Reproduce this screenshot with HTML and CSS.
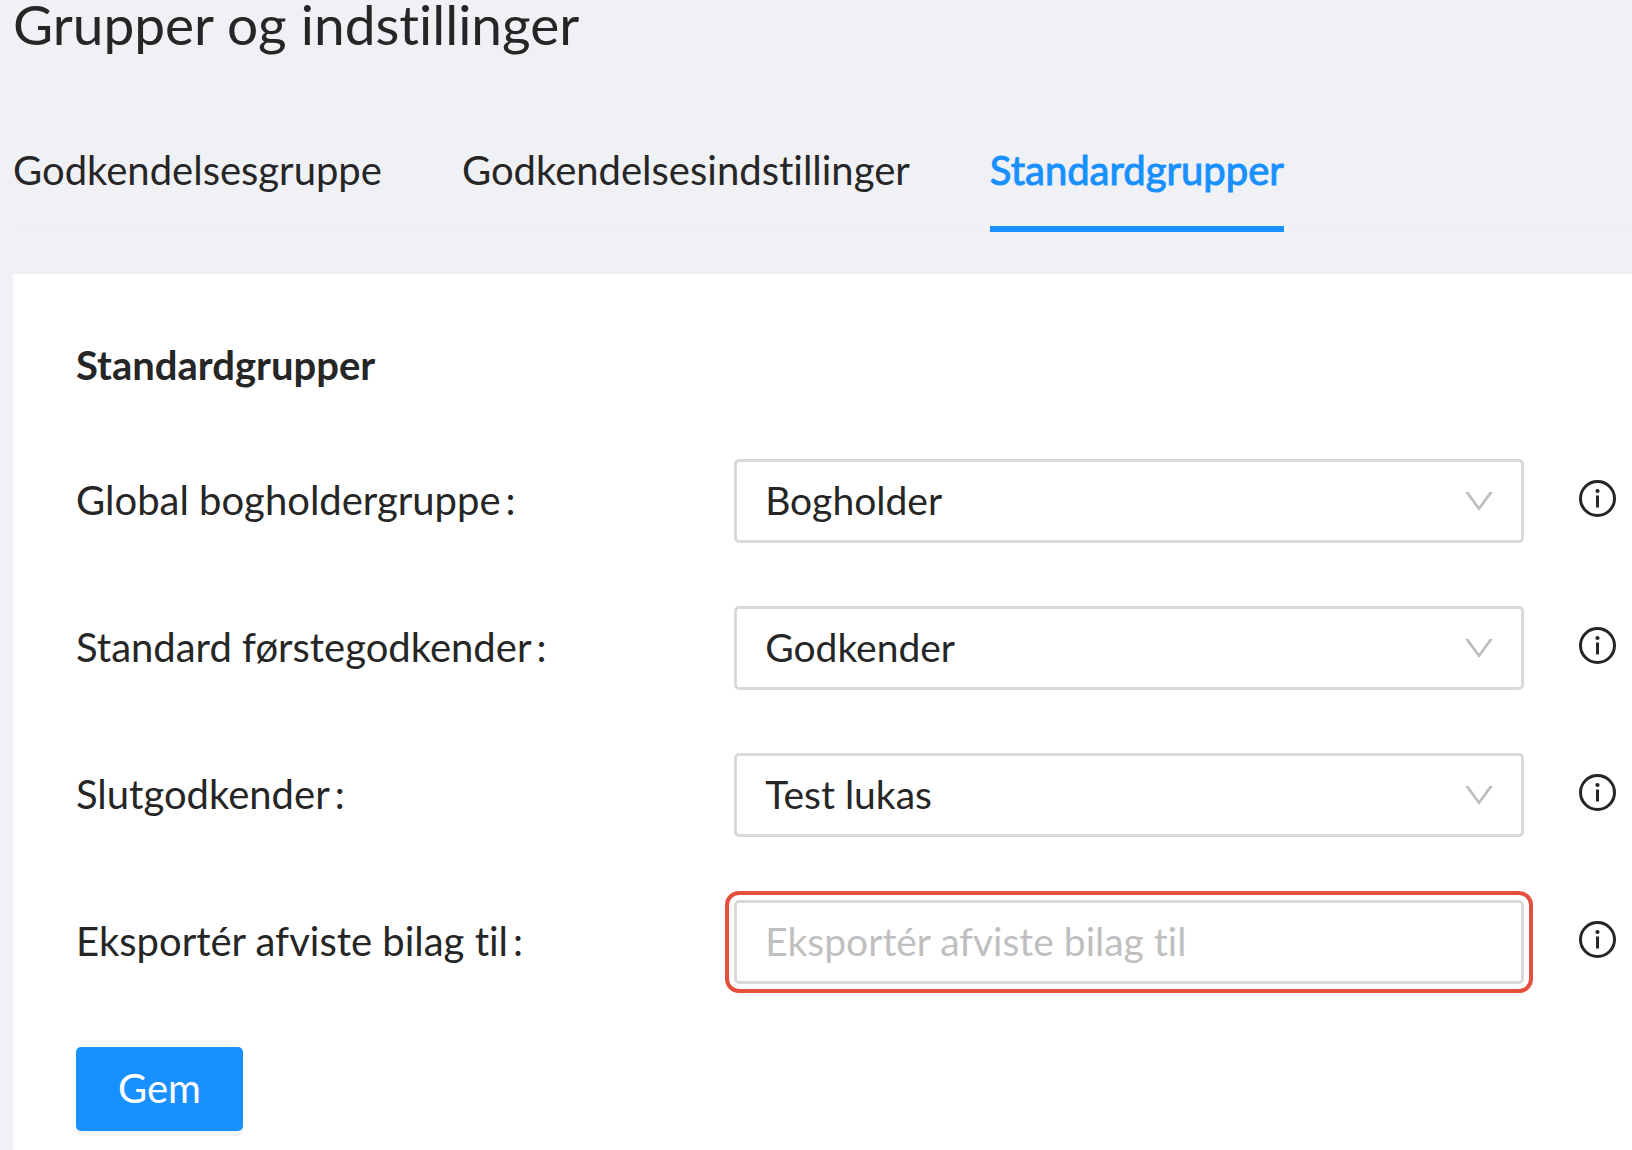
FILE: index.html
```html
<!DOCTYPE html>
<html lang="da">
<head>
    <meta charset="UTF-8">
    <meta name="viewport" content="width=device-width, initial-scale=1.0">
    <title>Grupper og indstillinger</title>
    <link rel="stylesheet" href="styles.css">
</head>
<body>
    <!-- Shared info icon -->
    <svg class="sprite" aria-hidden="true">
        <symbol id="icon-info" viewBox="0 0 37 37">
            <circle cx="18.5" cy="18.5" r="17" fill="none" stroke="currentColor" stroke-width="3"/>
            <circle cx="18.5" cy="11" r="2.1" fill="currentColor"/>
            <rect x="17" y="15.5" width="3" height="12" fill="currentColor"/>
        </symbol>
    </svg>

    <div class="page">
        <h1>Grupper og indstillinger</h1>

        <nav class="tabs">
            <a class="tab" href="#godkendelsesgruppe">Godkendelsesgruppe</a>
            <a class="tab" href="#godkendelsesindstillinger">Godkendelsesindstillinger</a>
            <a class="tab active" href="#standardgrupper" aria-current="page">Standardgrupper</a>
        </nav>

        <main class="card">
            <h2>Standardgrupper</h2>

            <form class="form">
                <div class="form-row">
                    <label for="bookkeeper">Global bogholdergruppe<span class="colon">:</span></label>
                    <select class="control" id="bookkeeper">
                        <option>Bogholder</option>
                    </select>
                    <button type="button" class="info-btn" aria-label="Info om global bogholdergruppe">
                        <svg class="icon"><use href="#icon-info"/></svg>
                    </button>
                </div>

                <div class="form-row">
                    <label for="firstApprover">Standard førstegodkender<span class="colon">:</span></label>
                    <select class="control" id="firstApprover">
                        <option>Godkender</option>
                    </select>
                    <button type="button" class="info-btn" aria-label="Info om standard førstegodkender">
                        <svg class="icon"><use href="#icon-info"/></svg>
                    </button>
                </div>

                <div class="form-row">
                    <label for="finalApprover">Slutgodkender<span class="colon">:</span></label>
                    <select class="control" id="finalApprover">
                        <option>Test lukas</option>
                    </select>
                    <button type="button" class="info-btn" aria-label="Info om slutgodkender">
                        <svg class="icon"><use href="#icon-info"/></svg>
                    </button>
                </div>

                <div class="form-row">
                    <label for="exportRejected">Eksportér afviste bilag til<span class="colon">:</span></label>
                    <input class="control highlighted" type="text" id="exportRejected" placeholder="Eksportér afviste bilag til">
                    <button type="button" class="info-btn" aria-label="Info om eksport af afviste bilag">
                        <svg class="icon"><use href="#icon-info"/></svg>
                    </button>
                </div>

                <button type="submit" class="save-btn">Gem</button>
            </form>
        </main>
    </div>
</body>
</html>
```
FILE: styles.css
```css
* {
    box-sizing: border-box;
}

body {
    background-color: #f0f1f5;
    color: #262626;
    font-family: Lato, "Open Sans", sans-serif;
    font-size: 40px;
    font-variant-ligatures: none;
    line-height: 58px;
    margin: 0;
}

.sprite {
    display: none;
}

.page {
    display: flex;
    flex-direction: column;
    min-height: 100vh;
    padding-left: 13px;
}

h1 {
    margin: 0;
    font-size: 55px;
    font-weight: 400;
    line-height: 48px;
}

.tabs {
    display: flex;
    gap: 80px;
    margin-top: 93px;
    margin-bottom: 42px;
    box-shadow: inset 0 -3px #eeefee;
}

.tab {
    padding-bottom: 27px;
    border-bottom: 6px solid transparent;
    color: inherit;
    text-decoration: none;
}

.tab.active {
    color: #1890ff;
    border-bottom-color: #1890ff;
    -webkit-text-stroke: 1px;
}

.card {
    flex: 1;
    background-color: #fff;
    padding: 62px 16px 16px 63px;
}

h2 {
    margin: 0 0 65px;
    font-size: 40px;
    font-weight: 700;
    line-height: 58px;
}

.form {
    display: flex;
    flex-direction: column;
    gap: 63px;
}

.form-row {
    display: grid;
    grid-template-columns: 5fr 6fr 92px;
    align-items: center;
}

.form-row label {
    padding-bottom: 3px;
}

.colon {
    margin-left: 5px;
}

.control {
    width: 100%;
    height: 84px;
    padding: 0 28px 3px;
    border: 3px solid #d9d9d9;
    border-radius: 5px;
    background-color: #fff;
    color: inherit;
    font: inherit;
    font-size: 39px;
    font-variant-ligatures: none;
}

select.control {
    appearance: none;
    background-image: url("data:image/svg+xml,%3Csvg xmlns='http://www.w3.org/2000/svg' width='28' height='19' viewBox='0 0 28 19'%3E%3Cpath d='M0 0h3.6L14 14.4 24.4 0H28L14 19z' fill='%23bfbfbf'/%3E%3C/svg%3E");
    background-repeat: no-repeat;
    background-position: right 28px center;
}

.control::placeholder {
    color: #bfbfbf;
    opacity: 1;
}

.control.highlighted {
    outline: 4px solid #e5503c;
    outline-offset: 5px;
}

.info-btn {
    justify-self: end;
    display: flex;
    padding: 0 0 5px;
    border: none;
    background: none;
    color: inherit;
    cursor: pointer;
}

.icon {
    width: 37px;
    height: 37px;
}

.save-btn {
    align-self: flex-start;
    height: 84px;
    padding: 0 42px 2px;
    border: none;
    border-radius: 5px;
    background-color: #1890ff;
    box-shadow: 0 5px 0 #f5f5f5;
    color: #fff;
    font: inherit;
    cursor: pointer;
}

.save-btn:hover {
    background-color: #40a9ff;
}
```
